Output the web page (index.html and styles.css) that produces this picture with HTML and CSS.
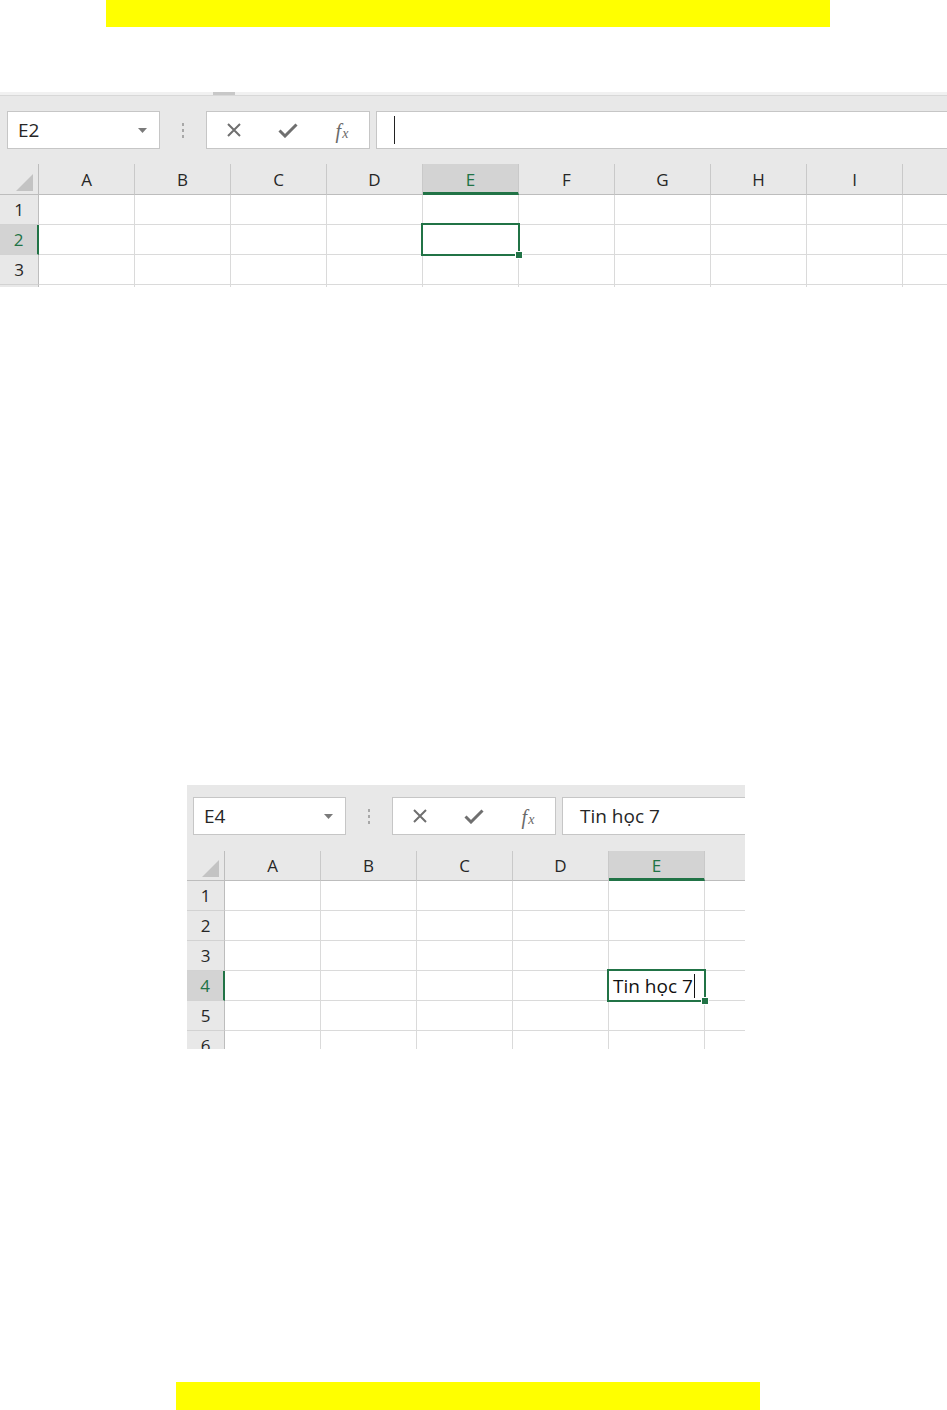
FILE: index.html
```html
<!DOCTYPE html>
<html>
<head>
	<meta charset="utf-8">
	<title>Nhập dữ liệu vào ô tính</title>
	<link rel="stylesheet" href="styles.css">
</head>
<body>
	<div class="banner banner-top"></div>

	<!-- Sheet 1: empty E2 selected -->
	<section class="sheet sheet-wide">
		<div class="ribbon-edge"><span class="grip"></span></div>
		<div class="formula-bar">
			<div class="name-box">
				<span>E2</span>
				<svg width="9" height="5" viewBox="0 0 9 5"><path d="M0 0H9L4.5 5Z" fill="#7a7a7a"/></svg>
			</div>
			<div class="bar-dots"><i></i><i></i><i></i></div>
			<div class="bar-buttons">
				<span class="bar-btn"><svg width="16" height="16" viewBox="0 0 16 16"><path d="M2 2L14 14M14 2L2 14" stroke="#6f6f6f" stroke-width="2" fill="none"/></svg></span>
				<span class="bar-btn"><svg width="20" height="15" viewBox="0 0 20 15"><path d="M1.5 7.5L7 13L18.5 1.5" stroke="#6f6f6f" stroke-width="3" fill="none"/></svg></span>
				<span class="bar-btn fx"><i>f</i><i class="fx-x">x</i></span>
			</div>
			<div class="formula-input"><span class="text-caret"></span></div>
		</div>
		<div class="grid grid-wide">
			<div class="col-head corner"><svg width="17" height="17" viewBox="0 0 17 17"><path d="M17 0V17H0Z" fill="#c3c3c3"/></svg></div>
			<div class="col-head">A</div>
			<div class="col-head">B</div>
			<div class="col-head">C</div>
			<div class="col-head">D</div>
			<div class="col-head on">E</div>
			<div class="col-head">F</div>
			<div class="col-head">G</div>
			<div class="col-head">H</div>
			<div class="col-head">I</div>
			<div class="col-head last"></div>

			<div class="row-head">1</div>
			<div class="cell"></div><div class="cell"></div><div class="cell"></div><div class="cell"></div><div class="cell"></div>
			<div class="cell"></div><div class="cell"></div><div class="cell"></div><div class="cell"></div><div class="cell last"></div>

			<div class="row-head on">2</div>
			<div class="cell"></div><div class="cell"></div><div class="cell"></div><div class="cell"></div><div class="cell active"></div>
			<div class="cell"></div><div class="cell"></div><div class="cell"></div><div class="cell"></div><div class="cell last"></div>

			<div class="row-head">3</div>
			<div class="cell"></div><div class="cell"></div><div class="cell"></div><div class="cell"></div><div class="cell"></div>
			<div class="cell"></div><div class="cell"></div><div class="cell"></div><div class="cell"></div><div class="cell last"></div>

			<div class="row-head"></div>
			<div class="cell"></div><div class="cell"></div><div class="cell"></div><div class="cell"></div><div class="cell"></div>
			<div class="cell"></div><div class="cell"></div><div class="cell"></div><div class="cell"></div><div class="cell last"></div>
		</div>
	</section>

	<!-- Sheet 2: typing into E4 -->
	<section class="sheet sheet-narrow">
		<div class="formula-bar">
			<div class="name-box">
				<span>E4</span>
				<svg width="9" height="5" viewBox="0 0 9 5"><path d="M0 0H9L4.5 5Z" fill="#7a7a7a"/></svg>
			</div>
			<div class="bar-dots"><i></i><i></i><i></i></div>
			<div class="bar-buttons">
				<span class="bar-btn"><svg width="16" height="16" viewBox="0 0 16 16"><path d="M2 2L14 14M14 2L2 14" stroke="#6f6f6f" stroke-width="2" fill="none"/></svg></span>
				<span class="bar-btn"><svg width="20" height="15" viewBox="0 0 20 15"><path d="M1.5 7.5L7 13L18.5 1.5" stroke="#6f6f6f" stroke-width="3" fill="none"/></svg></span>
				<span class="bar-btn fx"><i>f</i><i class="fx-x">x</i></span>
			</div>
			<div class="formula-input">Tin học 7</div>
		</div>
		<div class="grid grid-narrow">
			<div class="col-head corner"><svg width="17" height="17" viewBox="0 0 17 17"><path d="M17 0V17H0Z" fill="#c3c3c3"/></svg></div>
			<div class="col-head">A</div>
			<div class="col-head">B</div>
			<div class="col-head">C</div>
			<div class="col-head">D</div>
			<div class="col-head on">E</div>
			<div class="col-head last"></div>

			<div class="row-head">1</div>
			<div class="cell"></div><div class="cell"></div><div class="cell"></div><div class="cell"></div><div class="cell"></div><div class="cell last"></div>
			<div class="row-head">2</div>
			<div class="cell"></div><div class="cell"></div><div class="cell"></div><div class="cell"></div><div class="cell"></div><div class="cell last"></div>
			<div class="row-head">3</div>
			<div class="cell"></div><div class="cell"></div><div class="cell"></div><div class="cell"></div><div class="cell"></div><div class="cell last"></div>
			<div class="row-head on">4</div>
			<div class="cell"></div><div class="cell"></div><div class="cell"></div><div class="cell"></div>
			<div class="cell active"><span class="cell-text">Tin học 7</span><span class="cell-caret"></span></div>
			<div class="cell last"></div>
			<div class="row-head">5</div>
			<div class="cell"></div><div class="cell"></div><div class="cell"></div><div class="cell"></div><div class="cell"></div><div class="cell last"></div>
			<div class="row-head">6</div>
			<div class="cell"></div><div class="cell"></div><div class="cell"></div><div class="cell"></div><div class="cell"></div><div class="cell last"></div>
		</div>
	</section>

	<div class="banner banner-bottom"></div>
</body>
</html>
```

FILE: styles.css
```css
/* Page */

html, body { margin: 0; padding: 0; }
body { background: #fff; color: #262626; font-family: "Open Sans", "Noto Sans", sans-serif; }

.banner { background: #ffff00; }
.banner-top { margin-left: 106px; width: 724px; height: 27px; }
.banner-bottom { margin-left: 176px; width: 584px; height: 28px; margin-top: 333px; }

/* Sheet snippets */

.sheet { overflow: hidden; background: #e8e8e8; }
.sheet-wide { margin-top: 65px; width: 947px; height: 195px; }
.sheet-narrow { margin-top: 498px; margin-left: 187px; width: 558px; height: 264px; }

.ribbon-edge { height: 3px; background: #f1f1f1; }
.grip { display: block; margin-left: 213px; width: 22px; height: 3px; background: #c8c8c8; }
.sheet-wide .formula-bar { border-top: 1px solid #d8d8d8; padding: 15px 0 15px 7px; }
.sheet-narrow .formula-bar { padding: 12px 0 16px 6px; }

.formula-bar { display: flex; align-items: center; height: 38px; box-sizing: content-box; }
.name-box { display: flex; align-items: center; justify-content: space-between; box-sizing: border-box; width: 153px; height: 38px; padding: 0 12px 0 10px; background: #fff; border: 1px solid #c6c6c6; font-size: 19px; }
.bar-dots { width: 46px; display: flex; flex-direction: column; align-items: center; gap: 3px; }
.bar-dots i { display: block; width: 2px; height: 3px; background: #a8a8a8; }
.bar-buttons { display: flex; box-sizing: border-box; width: 164px; height: 38px; background: #fff; border: 1px solid #c6c6c6; }
.bar-btn { width: 54px; display: flex; align-items: center; justify-content: center; }
.fx { font-family: "Liberation Serif", "DejaVu Serif", serif; color: #6a6a6a; padding-top: 2px; }
.fx i { font-size: 20px; }
.fx .fx-x { font-size: 14px; margin-left: 1px; margin-top: 5px; }
.formula-input { flex: 1; min-width: 0; display: flex; align-items: center; box-sizing: border-box; height: 38px; margin-left: 6px; padding-left: 17px; background: #fff; border: 1px solid #c6c6c6; border-right: 0; font-size: 19px; }
.text-caret { display: block; width: 1px; height: 28px; background: #222; }

/* Grid */

.grid { display: grid; grid-auto-rows: 30px; }
.grid-wide { grid-template-columns: 39px repeat(9, 96px) 1fr; grid-template-rows: 31px; }
.grid-narrow { grid-template-columns: 38px repeat(5, 96px) 1fr; }
.grid > div { box-sizing: border-box; }

.col-head { display: flex; align-items: center; justify-content: center; background: #e8e8e8; border-right: 1px solid #c9c9c9; border-bottom: 1px solid #bdbdbd; font-size: 17px; }
.col-head.corner { justify-content: flex-end; align-items: flex-end; padding: 0 5px 3px 0; border-right-color: #bdbdbd; }
.col-head.on { background: #d3d3d3; color: #217346; border-bottom: 3px solid #217346; padding-top: 2px; }
.col-head.last { border-right: 0; }

.row-head { display: flex; align-items: center; justify-content: center; background: #e8e8e8; border-right: 1px solid #bdbdbd; border-bottom: 1px solid #d2d2d2; font-size: 17px; }
.row-head.on { background: #d3d3d3; color: #217346; border-right: 2px solid #217346; }

.cell { background: #fff; border-right: 1px solid #dadada; border-bottom: 1px solid #dadada; }
.cell.last { border-right: 0; }
.cell.active { position: relative; display: flex; align-items: center; padding-left: 4px; }
.cell.active::after { content: ""; position: absolute; left: -2px; top: -2px; right: -2px; bottom: -2px; border: 2px solid #217346; }
.cell.active::before { content: ""; position: absolute; right: -5px; bottom: -5px; width: 6px; height: 6px; background: #217346; border: 1px solid #fff; z-index: 1; }
.cell-text { font-size: 19px; color: #111; }
.cell-caret { display: block; width: 1px; height: 24px; margin-left: 1px; background: #111; }
```
